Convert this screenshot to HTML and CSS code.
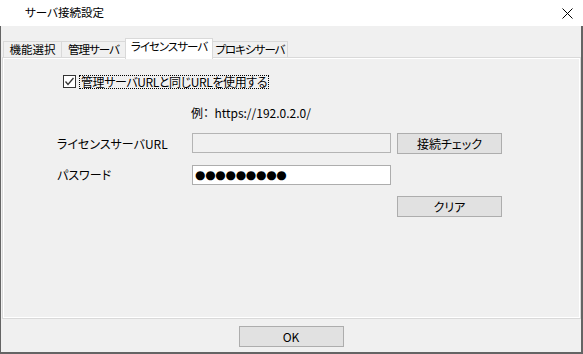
FILE: index.html
```html
<!DOCTYPE html>
<html lang="ja">
<head>
    <meta charset="UTF-8">
    <title>サーバ接続設定</title>
    <link rel="stylesheet" href="styles.css">
</head>
<body>
    <div class="window">
        <div class="titlebar">
            <span class="title">サーバ接続設定</span>
            <svg class="close" width="11" height="11" viewBox="0 0 11 11">
                <path d="M0.5 0.5 L10.5 10.5 M10.5 0.5 L0.5 10.5" stroke="#000" stroke-width="1" fill="none"/>
            </svg>
        </div>

        <div class="client">
            <!-- Tab strip -->
            <div class="tabs">
                <div class="tab tab-func">機能選択</div>
                <div class="tab tab-admin">管理サーバ</div>
                <div class="tab tab-license active">ライセンスサーバ</div>
                <div class="tab tab-proxy">プロキシサーバ</div>
            </div>

            <div class="tab-page">
                <div class="check-row">
                    <span class="checkbox">
                        <svg width="11" height="11" viewBox="0 0 11 11">
                            <path d="M1.5 5.5 L4 8.5 L9.5 2" stroke="#333" stroke-width="1.3" fill="none"/>
                        </svg>
                    </span>
                    <span class="check-label">管理サーバURLと同じURLを使用する</span>
                </div>

                <div class="example">例：&nbsp; https://192.0.2.0/</div>

                <div class="form-grid">
                    <div class="field-label">ライセンスサーバURL</div>
                    <div class="text-box disabled"></div>
                    <div class="button">接続チェック</div>

                    <div class="field-label">パスワード</div>
                    <div class="text-box password">●●●●●●●●●</div>
                    <div></div>

                    <div></div>
                    <div></div>
                    <div class="button">クリア</div>
                </div>
            </div>

            <div class="footer">
                <div class="button ok">OK</div>
            </div>
        </div>
    </div>
</body>
</html>
```

FILE: styles.css
```css
body {
    margin: 0;
    padding: 0;
    font-family: "Noto Sans CJK JP", sans-serif;
    font-size: 12px;
    font-feature-settings: "palt";
    color: #000;
    background: #fff;
}

.window {
    width: 583px;
    height: 354px;
    display: flex;
    flex-direction: column;
}

.titlebar {
    height: 26px;
    flex: none;
    box-sizing: border-box;
    background: #fff;
    display: flex;
    align-items: center;
    justify-content: space-between;
    padding: 0 10px 0 25px;
}

.title {
    font-size: 11.5px;
    line-height: 1;
}

.close {
    display: block;
    margin-top: 1px;
}

.client {
    flex: 1;
    background: #f0f0f0;
    border-left: 1px solid #646464;
    border-right: 2px solid #646464;
    border-bottom: 2px solid #646464;
    display: flex;
    flex-direction: column;
}

/* Tabs */
.tabs {
    display: flex;
    align-items: flex-end;
    height: 19px;
    margin-top: 12px;
    padding-left: 2px;
}

.tab {
    height: 16px;
    box-sizing: border-box;
    border: 1px solid #d9d9d9;
    border-bottom: 0;
    background: #f0f0f0;
    display: flex;
    align-items: center;
    justify-content: center;
    font-size: 11.5px;
    line-height: 1;
    white-space: nowrap;
    letter-spacing: -1px;
    margin-left: -1px;
}

.tab-func {
    width: 59px;
    margin-left: 0;
    letter-spacing: 0;
}

.tab-admin {
    width: 65px;
}

.tab-license {
    width: 88px;
}

.tab-proxy {
    width: 76px;
}

.tab.active {
    height: 21px;
    margin-bottom: -2px;
    background: #fff;
    padding-bottom: 4px;
    position: relative;
    z-index: 1;
}

.tab-page {
    height: 262px;
    box-sizing: border-box;
    margin-left: 1px;
    border: 1px solid #d9d9d9;
    box-shadow: inset 1px 1px 0 #fff, inset -1px -1px 0 #fff;
    padding: 17px 0 0 54px;
}

/* Checkbox */
.check-row {
    display: flex;
    align-items: center;
    gap: 3px;
    height: 14px;
    margin-left: 6px;
}

.checkbox {
    width: 13px;
    height: 13px;
    box-sizing: border-box;
    border: 1px solid #333;
    background: #fff;
    display: flex;
    align-items: center;
    justify-content: center;
    margin-top: -1px;
}

.check-label {
    border: 1px dotted #000;
    height: 14px;
    box-sizing: border-box;
    line-height: 12px;
    padding: 0 1px;
    white-space: nowrap;
    letter-spacing: -0.4px;
}

.example {
    margin: 17px 0 0 134px;
    height: 14px;
    line-height: 14px;
}

/* Form */
.form-grid {
    display: grid;
    grid-template-columns: 129px 199px 105px;
    grid-template-rows: 21px 20px 21px;
    column-gap: 6px;
    row-gap: 11px;
    margin-top: 13px;
}

.field-label {
    display: flex;
    align-items: center;
    line-height: 1;
    white-space: nowrap;
}

.text-box {
    height: 20px;
    box-sizing: border-box;
    border: 1px solid #adadad;
    background: #fff;
    display: flex;
    align-items: center;
    padding-left: 2px;
}

.text-box.disabled {
    background: #f0f0f0;
    border-color: #b4b4b4;
}

.text-box.password {
    font-family: "DejaVu Sans", sans-serif;
    font-size: 12px;
    letter-spacing: -0.3px;
    line-height: 1;
}

.button {
    height: 21px;
    box-sizing: border-box;
    border: 1px solid #adadad;
    background: #e1e1e1;
    display: flex;
    align-items: center;
    justify-content: center;
    line-height: 1;
}

.footer {
    flex: 1;
    display: flex;
    justify-content: center;
    padding-top: 7px;
}

.button.ok {
    width: 105px;
}
```
